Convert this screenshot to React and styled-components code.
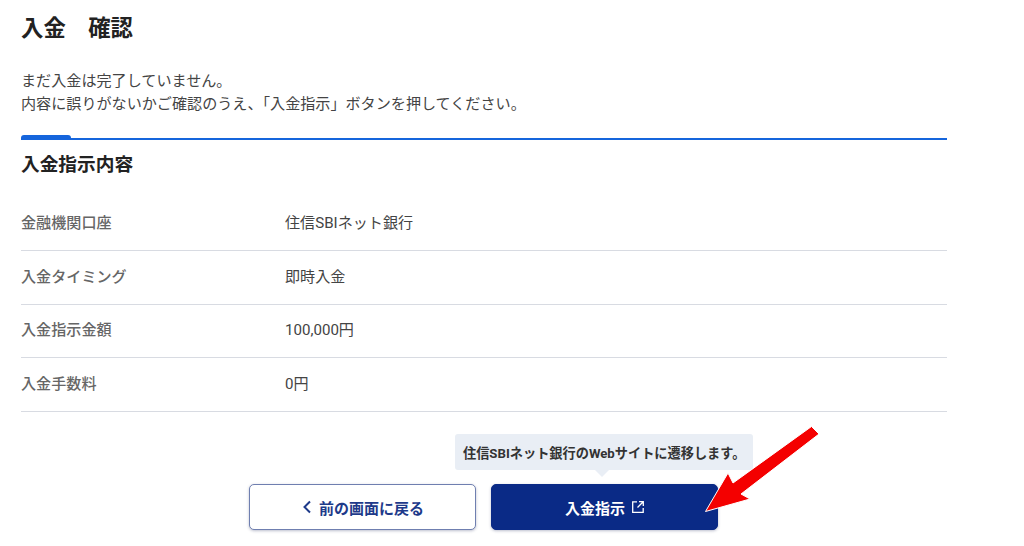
import styled, { createGlobalStyle } from 'styled-components'

const GlobalStyle = createGlobalStyle`
  html, body {
    margin: 0;
    background: #fff;
    font-family: Roboto, "Noto Sans CJK JP", sans-serif;
    color: #333;
  }
`

const Page = styled.main`
  position: relative;
  width: 926px;
  height: 546px;
  padding: 14px 0 0 21px;
`

const Title = styled.h1`
  margin: 0;
  font-size: 22.4px;
  line-height: 29px;
  font-weight: 700;
  color: #222;
`

const Lead = styled.p`
  margin: 27px 0 0;
  font-size: 15.1px;
  line-height: 23px;
  color: #444;
`

const SectionHead = styled.div`
  position: relative;
  margin-top: 22px;
  border-top: 2px solid #1565dc;
  padding-top: 12px;
  &::before {
    content: '';
    position: absolute;
    left: 0;
    top: -5px;
    width: 50px;
    height: 5px;
    background: #1565dc;
    border-radius: 3px 3px 0 2px;
  }
`

const SectionTitle = styled.h2`
  margin: 0;
  font-size: 18.7px;
  line-height: 26px;
  font-weight: 700;
  color: #222;
`

const Rows = styled.dl`
  margin: 19.5px 0 0;
`

const Row = styled.div`
  display: grid;
  grid-template-columns: 264px 1fr;
  align-items: center;
  height: 53.6px;
  padding-bottom: 5px;
  box-sizing: border-box;
  border-bottom: 1px solid #d8dbe2;
  font-size: 15.1px;
`

const Label = styled.dt`
  font-weight: 500;
  color: #666;
`

const Value = styled.dd`
  margin: 0;
  color: #444;
`

const Footer = styled.div`
  display: flex;
  flex-direction: column;
  margin-top: 22.5px;
`

const Tooltip = styled.div`
  position: relative;
  align-self: flex-start;
  margin-left: 434px;
  padding: 0 8px;
  height: 36px;
  display: flex;
  align-items: center;
  background: #e9eef5;
  border-radius: 3px;
  font-size: 13.2px;
  font-weight: 700;
  color: #333;
  white-space: nowrap;
  &::after {
    content: '';
    position: absolute;
    left: 50%;
    bottom: -7px;
    margin-left: -9px;
    border-left: 7px solid transparent;
    border-right: 7px solid transparent;
    border-top: 7px solid #e9eef5;
  }
`

const Buttons = styled.div`
  display: flex;
  gap: 15px;
  margin-top: 14px;
  margin-left: 228px;
`

const Button = styled.button`
  width: 227px;
  height: 46px;
  padding: 0;
  display: flex;
  align-items: center;
  justify-content: center;
  gap: ${props => (props.$primary ? '7px' : '6px')};
  box-sizing: border-box;
  border-radius: 5px;
  font-family: inherit;
  font-size: 15px;
  font-weight: 700;
  border: 1px solid ${props => (props.$primary ? '#0a2a86' : '#6f7fb0')};
  background: ${props => (props.$primary ? '#0a2a86' : '#fff')};
  color: ${props => (props.$primary ? '#fff' : '#1e3a8a')};
  box-shadow: 0 1px 3px rgba(30, 40, 90, 0.3);
`

const Arrow = styled.svg`
  position: absolute;
  left: 690px;
  top: 415px;
`

const BackIcon = () => (
  <svg width="12" height="14" viewBox="0 0 12 14" fill="none" stroke="currentColor" strokeWidth="2">
    <path d="M9 1.5 3.5 7 9 12.5" />
  </svg>
)

const ExternalIcon = () => (
  <svg width="12" height="12" viewBox="0 0 12 12" fill="none" stroke="currentColor" strokeWidth="1.3">
    <path d="M5 .8H.7v10.5h10.5V7" />
    <path d="M7 .7h4.3V5M11.2.8 5.5 6.5" />
  </svg>
)

const rows = [
  ['金融機関口座', '住信SBIネット銀行'],
  ['入金タイミング', '即時入金'],
  ['入金指示金額', '100,000円'],
  ['入金手数料', '0円'],
]

const App = () => (
  <>
    <GlobalStyle />
    <Page>
      <Title>入金　確認</Title>
      <Lead>
        まだ入金は完了していません。
        <br />
        内容に誤りがないかご確認のうえ、「入金指示」ボタンを押してください。
      </Lead>
      <SectionHead>
        <SectionTitle>入金指示内容</SectionTitle>
      </SectionHead>
      <Rows>
        {rows.map(([label, value]) => (
          <Row key={label}>
            <Label>{label}</Label>
            <Value>{value}</Value>
          </Row>
        ))}
      </Rows>
      <Footer>
        <Tooltip>住信SBIネット銀行のWebサイトに遷移します。</Tooltip>
        <Buttons>
          <Button>
            <BackIcon />
            前の画面に戻る
          </Button>
          <Button $primary>
            入金指示
            <ExternalIcon />
          </Button>
        </Buttons>
      </Footer>
      <Arrow width="140" height="110" viewBox="690 415 140 110">
        <path
          d="M811.500 426.500 819 434 741 494 750 499 705.500 511.500 728 473 733 483Z"
          fill="#f40000"
          stroke="#fff"
          strokeWidth="1"
        />
      </Arrow>
    </Page>
  </>
)

export default App
